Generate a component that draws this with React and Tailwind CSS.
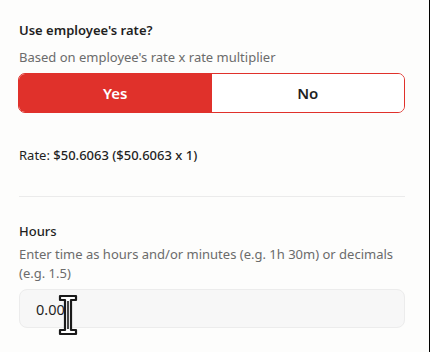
import { useState } from 'react';

export default function App() {
  const [useRate, setUseRate] = useState(true);
  const [hours, setHours] = useState('0.00');

  return (
    <div
      className="w-[430px] h-[352px] bg-[#fdfdfc] border-r border-black overflow-hidden relative"
      style={{ fontFamily: '"Noto Sans", "Open Sans", sans-serif' }}
    >
      <div className="pl-[19px] pr-[24px] pt-[20px]">
        {/* Use employee's rate */}
        <h3 className="text-[13px] font-semibold text-[#1f1f1f] leading-[20px]">Use employee's rate?</h3>
        <p className="text-[13px] text-[#6b6b6b] mt-[7px] leading-[20px]">
          Based on employee's rate x rate multiplier
        </p>
        <div className="mt-[6px] flex h-[40px] rounded-[7px] border border-[#e0312b] overflow-hidden -ml-px">
          <button
            onClick={() => setUseRate(true)}
            className={`flex-1 text-[15px] font-semibold ${useRate ? 'bg-[#e0312b] text-white' : 'bg-white text-[#1f1f1f]'}`}
          >
            Yes
          </button>
          <button
            onClick={() => setUseRate(false)}
            className={`flex-1 text-[15px] font-semibold ${!useRate ? 'bg-[#e0312b] text-white' : 'bg-white text-[#1f1f1f]'}`}
          >
            No
          </button>
        </div>

        <p className="mt-[32px] text-[13px] text-[#1f1f1f] leading-[20px]">
          Rate: <span className="font-medium">$50.6063 ($50.6063 x 1)</span>
        </p>

        <div className="mt-[31px] border-t border-[#ebebeb]" />

        {/* Hours */}
        <h3 className="mt-[24px] text-[13px] font-medium text-[#1f1f1f] leading-[20px]">Hours</h3>
        <p className="mt-[4px] text-[13px] text-[#6b6b6b] leading-[19px]">
          Enter time as hours and/or minutes (e.g. 1h 30m) or decimals (e.g. 1.5)
        </p>
        <div className="mt-[6px] relative">
          <input
            value={hours}
            onChange={(e) => setHours(e.target.value)}
            className="w-full h-[39px] rounded-[8px] border border-[#ececec] bg-[#f7f7f7] px-[16px] text-[14.5px] text-[#1f1f1f] outline-none"
          />
          {/* I-beam cursor overlay */}
          <svg className="absolute left-[39px] top-[5px]" width="20" height="42" viewBox="0 0 20 42">
            <path
              d="M2 2h16v4h-5v30h5v4H2v-4h5V6H2z"
              fill="#ffffff"
              stroke="#1a1a1a"
              strokeWidth="2.2"
              strokeLinejoin="round"
            />
            <path d="M10 7v28" stroke="#1a1a1a" strokeWidth="1.6" />
          </svg>
        </div>
      </div>
    </div>
  );
}
